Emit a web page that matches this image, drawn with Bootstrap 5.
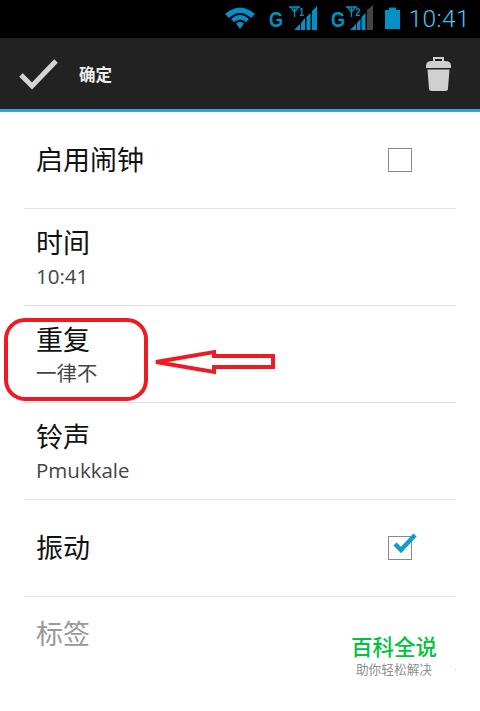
<!DOCTYPE html>
<html lang="zh">
<head>
<meta charset="utf-8">
<title>闹钟</title>
<link href="https://cdn.jsdelivr.net/npm/bootstrap@5.3.0/dist/css/bootstrap.min.css" rel="stylesheet">
<style>
html,body{height:711px;overflow:hidden;background:#fff}
body{width:480px;position:relative;font-family:"Open Sans","Noto Sans CJK SC",sans-serif}
.sbar{height:38px;background:#000;padding-right:10px}
.sclock{font-family:Roboto,sans-serif;font-weight:300;font-size:24.500px;color:#45c0f0;line-height:38px;margin-left:8px;letter-spacing:.4px}
.abar{height:74px;background:#222;border-bottom:3px solid #33a5d0;padding:0 29px 0 19px}
.oktext{font-size:16.500px;line-height:26px;font-weight:700;color:#eee;margin-left:20px;padding-top:2px}
.prefs{padding:0 24px}
.prow{border-bottom:1px solid #e2e2e2;height:97px;padding-left:13px;padding-right:44px}
.prow-last{height:73px;border-bottom:0}
.pt{font-size:27px;line-height:34px;color:#111;margin-left:-1px}
.ps{font-size:20.500px;line-height:26px;color:#444;margin-top:3px;margin-left:-1px}
.pmuted{color:#999}
.cbox{width:24px;height:24px;border:1.500px solid #8a8a8a;display:block}
.cwrap{position:relative;width:24px;height:24px}
.ctick{position:absolute;left:2px;top:-5px}
.hl{position:absolute;left:4px;top:318px;width:144px;height:83px;border:4px solid #ed1c24;border-radius:21px}
.arrowmark{position:absolute;left:154px;top:349px}
.wm{position:absolute;left:336px;top:633px;width:119px;height:51px;background:#fff;text-align:center;padding-right:3px}
.wm1{font-size:21.500px;line-height:28px;color:#00c23c;font-weight:500}
.wm2{font-size:12.700px;line-height:17px;color:#8f8f8f}
.enddot{position:absolute;left:455px;top:669px;width:1px;height:1px;background:#ccc}
</style>
</head>
<body>
<div class="sbar d-flex align-items-center justify-content-end">
<svg width="202" height="38" viewBox="200 0 202 38">
<g fill="#0590c4">
<path d="M227 14 Q242 1 257 14 L253 18 Q242 8 231 18Z"/>
<path d="M233 19 Q242 11 251 19 L248 22 Q242 17 236 22Z"/>
<path d="M238 23.500 Q242 20 246 23.500 L242 29Z"/>
</g>
<g fill="#0590c4" font-family="Liberation Sans,sans-serif" font-weight="700">
<text transform="translate(271 27) scale(.82 1)" font-size="22">G</text>
<text transform="translate(333 27) scale(.82 1)" font-size="22">G</text>
<text x="301.500" y="16" font-size="11" transform="translate(60 0) scale(.8 1)">1</text>
<text x="447" y="16" font-size="11" transform="scale(.8 1)">2</text>
</g>
<g stroke="#0590c4" fill="none" stroke-width="1.300">
<path d="M291 7h11M292.500 7l4 5 4-5M296.500 7v10"/>
<path d="M348 7h11M349.500 7l4 5 4-5M353.500 7v10"/>
</g>
<g fill="#0590c4">
<path d="M296 30l6-6v6zM303 30v-7l4-5v12zM308.500 30v-13l4-4v17zM314 30v-19l5-5v24z"/>
<path d="M352 30l6-6v6zM359 30v-7l3.500-4v11zM363.500 30v-13l4-4v17z"/>
</g>
<path d="M369 30v-20l6-5v25z" fill="#444"/>
<path d="M387 10h4v-2.500h7v2.500h4v19h-15z" fill="#0590c4"/>
</svg>
<span class="sclock">10:41</span>
</div>
<div class="abar d-flex align-items-center justify-content-between">
<div class="d-flex align-items-center">
<svg width="40" height="34" viewBox="0 0 40 34"><path d="M2 18 L13 29 L37 4" fill="none" stroke="#d4d4d4" stroke-width="5"/></svg>
<span class="oktext">确定</span>
</div>
<svg width="25" height="36" viewBox="0 0 25 36"><g fill="#d0d0d0"><path d="M7 5V1h11v4h-2V3h-7v2z"/><path d="M0 10Q0 5 6 5h13q6 0 6 5v2H0z"/><path d="M1.500 13.500h22l-1.500 19q0 2.500-3 2.500h-13q-3 0-3-2.500z"/></g></svg>
</div>
<main class="prefs">
<div class="prow d-flex align-items-center justify-content-between"><div class="pt">启用闹钟</div><span class="cbox"></span></div>
<div class="prow d-flex flex-column justify-content-center"><div class="pt">时间</div><div class="ps">10:41</div></div>
<div class="prow d-flex flex-column justify-content-center"><div class="pt">重复</div><div class="ps">一律不</div></div>
<div class="prow d-flex flex-column justify-content-center"><div class="pt">铃声</div><div class="ps">Pmukkale</div></div>
<div class="prow d-flex align-items-center justify-content-between"><div class="pt">振动</div>
<div class="cwrap"><span class="cbox"></span><svg class="ctick" width="28" height="24" viewBox="0 0 28 24"><path d="M5 13 L11 19 L25 4" fill="none" stroke="#0f9ccf" stroke-width="4.500"/></svg></div></div>
<div class="prow prow-last d-flex align-items-center"><div class="pt pmuted">标签</div></div>
</main>
<div class="hl"></div>
<svg class="arrowmark" width="124" height="28" viewBox="0 0 124 28"><path d="M2 13 L60 3 L60 7 L119 7 L119 18 L60 18 L60 23 Z" fill="#fff" stroke="#ed1c24" stroke-width="4"/></svg>
<div class="wm"><div class="wm1">百科全说</div><div class="wm2">助你轻松解决</div></div>
<div class="enddot"></div>
<script src="https://cdn.jsdelivr.net/npm/bootstrap@5.3.0/dist/js/bootstrap.bundle.min.js"></script>
</body>
</html>
